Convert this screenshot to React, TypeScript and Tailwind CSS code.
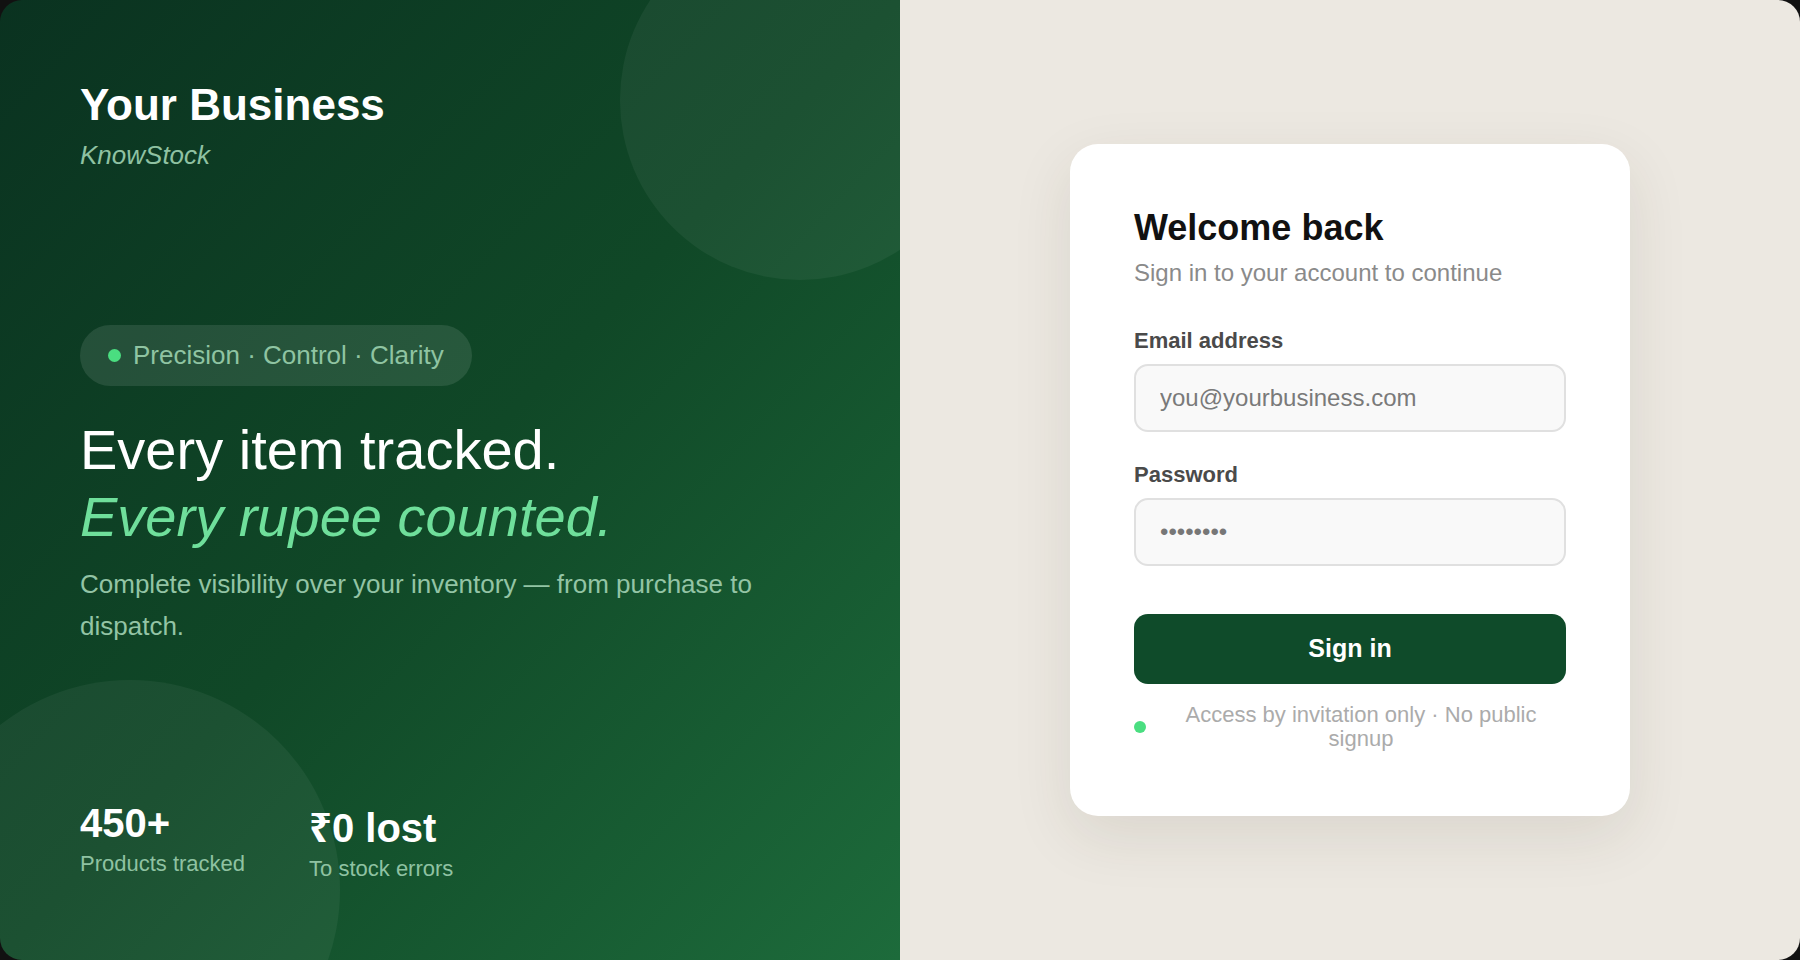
import React from "react";

const LoginPage: React.FC = () => {
  return (
    <div
      className="w-full h-[960px] bg-[#111111]"
      style={{ fontFamily: '"Liberation Sans", Arial, "Noto Sans", sans-serif' }}
    >
      <div className="w-full h-full flex rounded-[22px] overflow-hidden">
        {/* LEFT BRAND PANEL */}
        <div className="relative w-1/2 h-full overflow-hidden bg-gradient-to-br from-[#0a3220] via-[#104827] to-[#1d6b3b]">
          <div className="absolute -top-[80px] -right-[80px] w-[360px] h-[360px] rounded-full bg-white/5" />
          <div className="absolute -left-[80px] -bottom-[140px] w-[420px] h-[420px] rounded-full bg-white/5" />

          <div className="relative h-full flex flex-col justify-between pt-[79px] pb-[75px] px-20">
            {/* BRAND */}
            <div>
              <h1 className="text-white text-[44px] leading-[1.2] font-bold">
                Your Business
              </h1>
              <p className="mt-1.5 text-[26px] leading-[1.35] italic text-[#8fc2a2]">
                KnowStock
              </p>
            </div>

            {/* HERO */}
            <div>
              <div className="inline-flex items-center gap-3 h-[61px] px-7 rounded-full bg-white/10">
                <span className="w-[13px] h-[13px] rounded-full bg-[#4ade80]" />
                <span className="text-[26px] text-[#8fc4a2]">
                  Precision · Control · Clarity
                </span>
              </div>

              <h2 className="mt-[30px] text-[56px] leading-[1.2] text-white">
                Every item tracked.
                <br />
                <span className="italic text-[#6fdf9b]">Every rupee counted.</span>
              </h2>

              <p className="mt-3.5 text-[26px] leading-[1.6] text-[#93c4a5]">
                Complete visibility over your inventory — from purchase to dispatch.
              </p>
            </div>

            {/* STATS */}
            <div className="flex items-end gap-16">
              <div className="mb-[5px]">
                <p className="text-white text-[40px] leading-[1.2] font-bold">450+</p>
                <p className="text-[22px] leading-[1.5] text-[#8fc2a2]">Products tracked</p>
              </div>
              <div>
                <p className="text-white text-[40px] leading-[1.2] font-bold">₹0 lost</p>
                <p className="text-[22px] leading-[1.5] text-[#8fc2a2]">To stock errors</p>
              </div>
            </div>
          </div>
        </div>

        {/* RIGHT FORM PANEL */}
        <div className="w-1/2 h-full bg-[#ece8e1] flex items-center justify-center">
          <div className="w-[560px] bg-white rounded-[28px] px-16 pt-[65px] pb-[65px] shadow-[0_20px_60px_rgba(60,50,30,0.10)]">
            <h3 className="text-[36px] leading-[38px] font-bold text-[#111111]">
              Welcome back
            </h3>
            <p className="mt-[9px] text-[24px] leading-[1.45] text-[#8a8a8a]">
              Sign in to your account to continue
            </p>

            <form className="mt-[35px]" onSubmit={(e) => e.preventDefault()}>
              <label className="block text-[22px] leading-[30px] font-bold text-[#4a4a4a]">
                Email address
              </label>
              <input
                type="email"
                placeholder="you@yourbusiness.com"
                className="mt-2 block w-full h-[68px] px-6 rounded-[14px] border-2 border-[#e0e0e0] bg-[#f9f9f9] text-[24px] text-[#6f6f6f] placeholder:text-[#7a7a7a] outline-none"
              />

              <label className="mt-7 block text-[22px] leading-[30px] font-bold text-[#4a4a4a]">
                Password
              </label>
              <input
                type="password"
                defaultValue="password"
                className="mt-2 block w-full h-[68px] px-6 rounded-[14px] border-2 border-[#e0e0e0] bg-[#f9f9f9] text-[24px] text-[#777777] outline-none"
              />

              <button
                type="submit"
                className="mt-12 w-full h-[70px] rounded-[14px] bg-[#0f4b2a] text-white text-[25px] font-bold"
              >
                Sign in
              </button>
            </form>

            <div className="mt-[19px] flex items-center gap-[10px]">
              <span className="w-3 h-3 rounded-full bg-[#4ade80] shrink-0" />
              <p className="flex-1 text-center text-[22px] leading-[24px] text-[#ababab]">
                Access by invitation only · No public signup
              </p>
            </div>
          </div>
        </div>
      </div>
    </div>
  );
};

export default function App() {
  return <LoginPage />;
}
